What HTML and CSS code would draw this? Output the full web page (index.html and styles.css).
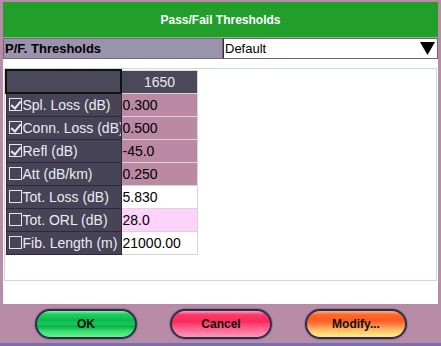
FILE: index.html
```html
<!DOCTYPE html>
<html lang="en">
<head>
    <meta charset="UTF-8">
    <title>Pass/Fail Thresholds</title>
    <link rel="stylesheet" href="styles.css">
</head>
<body>
    <div class="frame">
        <div class="title">Pass/Fail Thresholds</div>
        <div class="selector">
            <div class="selector-label">P/F. Thresholds</div>
            <div class="selector-value">
                <span>Default</span>
                <svg class="arrow" width="15" height="13" viewBox="0 0 15 13"><path d="M0 0H15L7.5 13Z" fill="#000"/></svg>
            </div>
        </div>
        <div class="content">
            <div class="panel">
                <table class="grid">
                    <tr>
                        <th class="corner"></th>
                        <th class="wave">1650</th>
                    </tr>
                    <tr>
                        <td class="name"><span class="box checked"></span>Spl. Loss (dB)</td>
                        <td class="val mauve">0.300</td>
                    </tr>
                    <tr>
                        <td class="name"><span class="box checked"></span>Conn. Loss (dB)</td>
                        <td class="val mauve">0.500</td>
                    </tr>
                    <tr>
                        <td class="name"><span class="box checked"></span>Refl (dB)</td>
                        <td class="val mauve">-45.0</td>
                    </tr>
                    <tr>
                        <td class="name"><span class="box"></span>Att (dB/km)</td>
                        <td class="val mauve">0.250</td>
                    </tr>
                    <tr>
                        <td class="name"><span class="box"></span>Tot. Loss (dB)</td>
                        <td class="val">5.830</td>
                    </tr>
                    <tr>
                        <td class="name"><span class="box"></span>Tot. ORL (dB)</td>
                        <td class="val pink">28.0</td>
                    </tr>
                    <tr>
                        <td class="name"><span class="box"></span>Fib. Length (m)</td>
                        <td class="val">21000.00</td>
                    </tr>
                </table>
            </div>
        </div>
        <div class="footer">
            <button class="pill ok">OK</button>
            <button class="pill cancel">Cancel</button>
            <button class="pill modify">Modify...</button>
        </div>
        <div class="bottom-line"></div>
    </div>
</body>
</html>
```

FILE: styles.css
```css
body {
    margin: 0;
    font-family: 'Liberation Sans', Arial, sans-serif;
    background: #b88ba6;
}
.frame {
    width: 441px;
    height: 346px;
    box-sizing: border-box;
    padding: 2px 3px 0 3px;
    display: flex;
    flex-direction: column;
}
.title {
    height: 35px;
    background: #229f2b;
    color: #fff;
    font-weight: bold;
    font-size: 12px;
    display: flex;
    align-items: center;
    justify-content: center;
    border-bottom: 1px solid #7fc07f;
}
.selector {
    height: 21px;
    display: flex;
    background: #fff;
}
.selector-label {
    width: 217px;
    background: #9a93ad;
    border: 1px solid #7b6478;
    font-weight: bold;
    font-size: 13px;
    display: flex;
    align-items: center;
    padding-left: 1px;
}
.selector-value {
    flex: 1;
    border: 1px solid #7b6478;
    border-left: 1px solid #3a2a3a;
    font-size: 13px;
    display: flex;
    align-items: center;
    justify-content: space-between;
    padding-left: 1px;
}
.arrow {
    margin-right: 2px;
}
.content {
    height: 245px;
    background: #fff;
    padding: 9px 1px 0 1px;
    box-sizing: border-box;
}
.panel {
    height: 213px;
    border: 1px solid #c9dcc9;
    border-right-color: #c0e0dc;
    box-sizing: border-box;
}
.grid {
    border-collapse: collapse;
    font-size: 14px;
}
.grid th, .grid td {
    height: 22px;
    padding: 0;
    border: 1px solid #d9d6d9;
}
.corner {
    width: 113px;
    height: 21px !important;
    background: #4a4859;
    border: 2px solid #111 !important;
}
.wave {
    width: 75px;
    background: #4a4859;
    color: #e8e8ee;
    font-weight: normal;
    font-size: 14px;
}
.name {
    background: #464456;
    color: #ececf0;
    white-space: nowrap;
    overflow: hidden;
    max-width: 113px;
    border-color: #2c2a38 !important;
}
.val {
    background: #fff;
    color: #000;
    padding-left: 1px !important;
}
.mauve {
    background: #bc89a5;
}
.pink {
    background: #fdd3fc;
}
.box {
    display: inline-block;
    width: 11px;
    height: 11px;
    border: 1px solid #e8e8ec;
    margin: 0 1px 0 2px;
    vertical-align: -1px;
    position: relative;
}
.box.checked::after {
    content: '';
    position: absolute;
    left: 3px;
    top: 0;
    width: 4px;
    height: 8px;
    border: solid #e8e8ec;
    border-width: 0 2px 2px 0;
    transform: rotate(40deg);
}
.footer {
    flex: 1;
    display: flex;
    justify-content: space-between;
    align-items: center;
    padding: 0 31px 0 32px;
}
.pill {
    width: 102px;
    height: 30px;
    border: 2px solid #2d2c4e;
    border-radius: 15px;
    font-family: 'Liberation Sans', Arial, sans-serif;
    font-weight: bold;
    font-size: 12px;
    color: #111;
    box-shadow: 0 0 0 1px #8c7a90;
}
.ok {
    background: linear-gradient(#8af0a8 0, #1ed060 12%, #0db84c 35%, #16c85a 50%, #0cb04a 60%, #30dc6c 75%, #6cf08c 100%);
}
.cancel {
    background: linear-gradient(#ffa0c0 0, #ff3868 14%, #f82a5c 40%, #ff4a78 55%, #ff6e98 75%, #ff9ab8 100%);
}
.modify {
    background: linear-gradient(#ffb080 0, #ff6a28 14%, #ff5a20 35%, #ff7a40 50%, #ffb060 68%, #ffe07a 90%, #ffe890 100%);
}
.bottom-line {
    height: 3px;
    margin: 0 -3px;
    background: #7a6db0;
}
```
